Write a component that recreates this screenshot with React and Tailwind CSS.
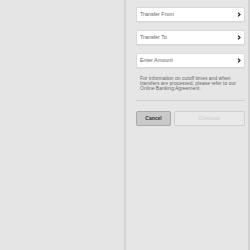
import React from "react";

function Field({ label }) {
  return (
    <div className="flex h-[15px] items-center justify-between rounded-[2px] border border-[#d9d9d9] bg-white pl-[3px] pr-[3px] shadow-[0_1px_0_rgba(0,0,0,0.04)]">
      <span className="text-[5.4px] leading-none text-[#666]">{label}</span>
      <svg width="4" height="5" viewBox="0 0 4 5" className="block">
        <path d="M1 0.6 L3 2.5 L1 4.4" fill="none" stroke="#222" strokeWidth="1.2" />
      </svg>
    </div>
  );
}

export default function App() {
  return (
    <div
      className="flex h-[250px] w-[250px] overflow-hidden bg-[#e5e5e5]"
      style={{ fontFamily: '"Liberation Sans", Arial, sans-serif' }}
    >
      <div className="w-[124px] shrink-0 bg-[#e5e5e5]" />
      <div className="w-[2px] shrink-0 bg-[#d4d4d4]" />
      <div className="flex w-[122px] shrink-0 flex-col bg-[#e6e6e6] pl-[10px] pr-[3px] pt-[7px]">
        <div className="flex flex-col gap-[8px]">
          <Field label="Transfer From" />
          <Field label="Transfer To" />
          <Field label="Enter Amount" />
        </div>
        <p className="mt-[8px] px-[4px] text-[5px] leading-[5px] text-[#6a6a6a]">
          For information on cutoff times and when transfers are processed, please refer to our Online Banking Agreement.
        </p>
        <div className="mt-[9px] h-[2px] border-t border-[#cfcfcf] border-b-white" />
        <div className="mt-[9px] flex gap-[3px]">
          <button className="flex h-[15px] w-[35px] items-center justify-center rounded-[2px] border border-[#a9a9a9] bg-[#c9c9c9] text-[5px] font-bold text-[#333]">
            Cancel
          </button>
          <button className="flex h-[15px] flex-1 items-center justify-center rounded-[2px] border border-[#d0d0d0] bg-[#e9e9e9] text-[5px] font-bold text-[#d2d2d2]">
            Continue
          </button>
        </div>
      </div>
      <div className="w-[2px] shrink-0 bg-[#d2d2d2]" />
    </div>
  );
}
